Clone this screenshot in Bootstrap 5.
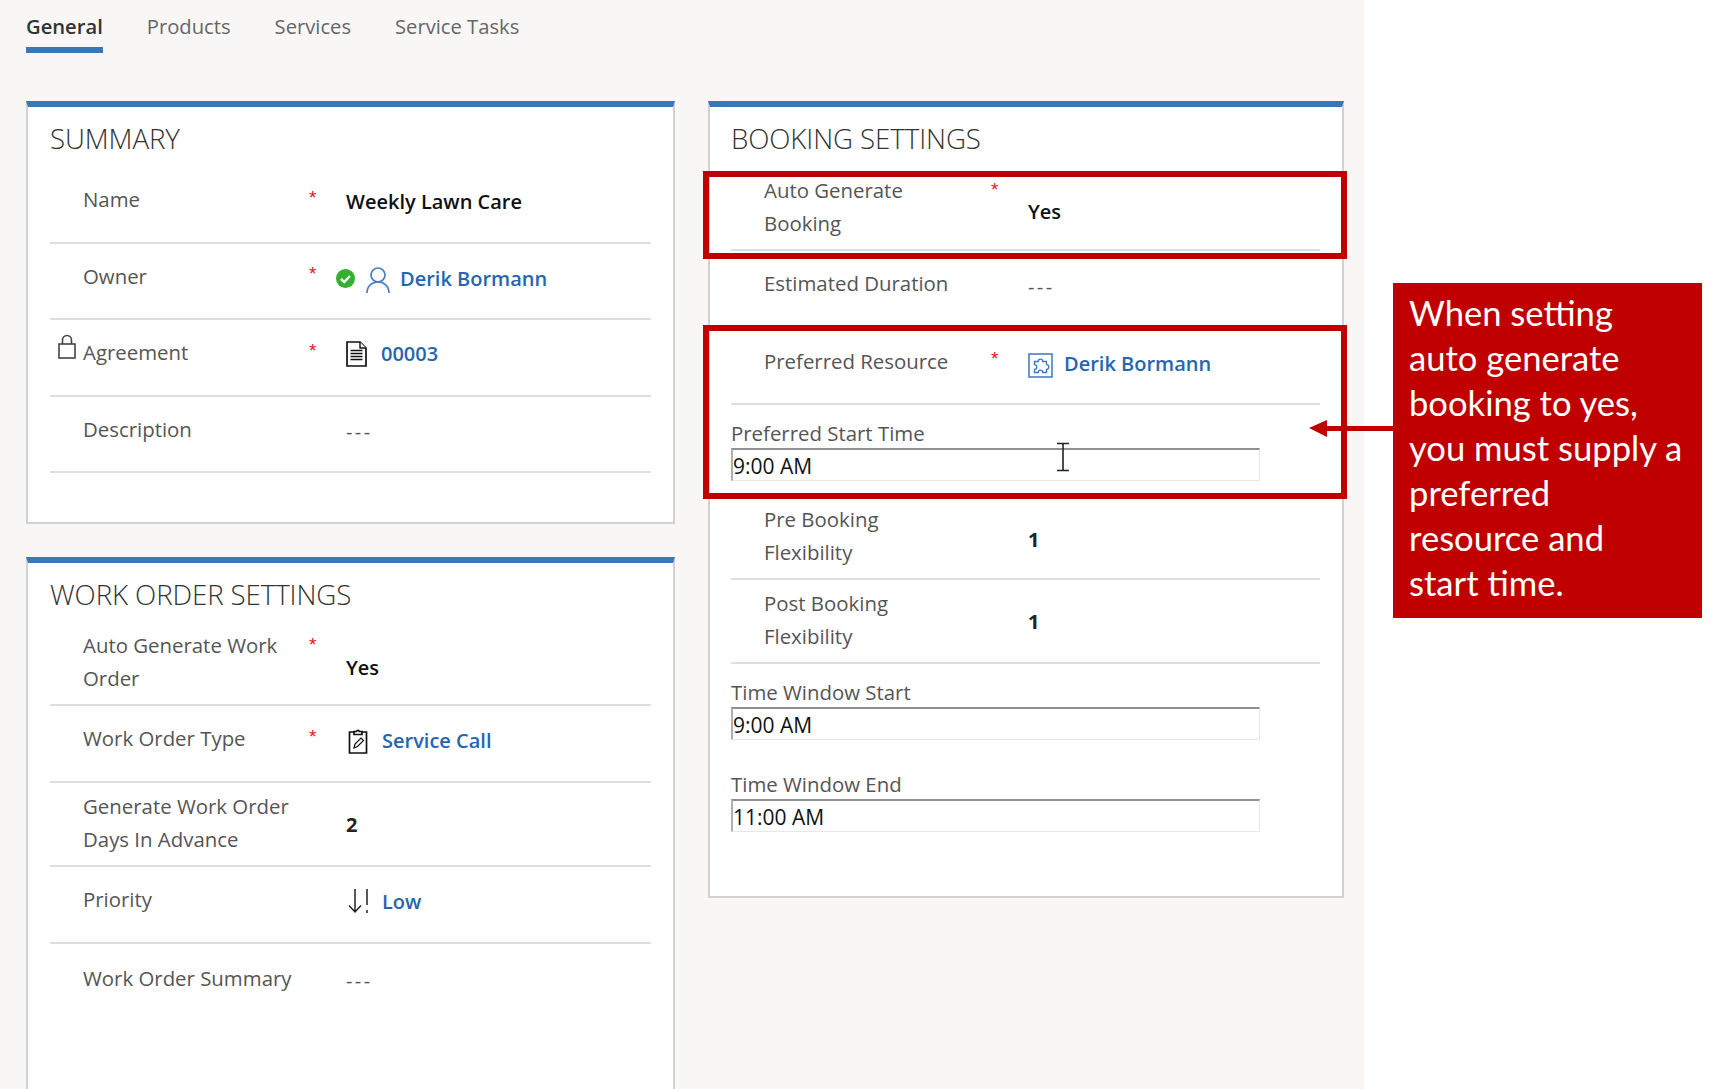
<!DOCTYPE html>
<html lang="en"><head><meta charset="utf-8"><title>Agreement booking setup</title>
<link rel="stylesheet" href="https://cdn.jsdelivr.net/npm/bootstrap@5.3.0/dist/css/bootstrap.min.css">
<style>
html,body{margin:0;background:#fff;overflow:hidden}
body{font-family:"Open Sans","Noto Sans",sans-serif}
.stage{width:1716px;height:1089px;overflow:hidden}
.sheet{width:1364px;height:1089px;background:#f8f7f6;padding-left:26px;overflow:hidden;flex:none}
.tabbar{height:101px;gap:44px;align-items:flex-start}
.tabitem{display:block;height:53px;padding:11px 0 0;font-size:20.2px;line-height:30px;color:#666;text-decoration:none}
.tabitem.on{color:#333;font-weight:600;border-bottom:6px solid #3a76b8}
.leftcol{width:649px;gap:33px}
.rightcol{width:636px;margin-left:33px}
.sect{border:2px solid #d2d2d2;border-top:6px solid #3a76b8;border-radius:0;background:#fff;padding:0 22px}
.sect.s1{height:423px}.sect.s2{height:620px}.sect.s3{height:797px;padding-left:21px}
.sect-title{font-size:27.7px;font-weight:300;color:#333;height:60px;line-height:34px;padding-top:14px;margin:0;letter-spacing:-.1px}
.fld{height:76.5px;border-bottom:2px solid #dedede;padding:16px 0 0 33px;display:flex;align-items:flex-start;position:relative}
.fld.two{padding-top:7px;height:83px}
.fld.two.first{padding-top:6px}
.fld.gen{height:84px}
.fld.tall{height:77.5px}
.fld.bare{border-bottom:0}
.fld.pad-wo{padding-top:18px}
.flab{width:215px;margin-right:11px;font-size:20.4px;line-height:33px;color:#555;flex:none}
.s3 .flab{margin-right:12px}
.star{width:37px;flex:none;color:#e8141c;font-size:19px;line-height:19px;margin-top:4.5px;font-family:"Liberation Sans",sans-serif}
.two .star{margin-top:6px}
.fval{font-size:20px;line-height:33px;margin-top:2px;color:#111;display:flex;align-items:center;font-weight:600}
.fld.two .fval{margin-top:22px}
.fld.two .fval.vgen{margin-top:18px}
.fld.two .fval.vbook{margin-top:20.500px}
.fld.two .fval.flexa{margin-top:19.6px}
.fld.two .fval.flexb{margin-top:18.4px}
.fval.vdoc{margin-top:1px}
.fval.ownerv{margin-left:-10px}
.fval.empty{color:#555;font-weight:400;letter-spacing:2.4px}
.fval a{color:#2566b0;text-decoration:none;letter-spacing:0}
.num{font-weight:700;color:#222}
.s3 .fld.bare{padding-top:16px}
.s3 .fld.bare .fval{margin-top:3px}
.ic-check{margin-right:10px}
.ic-person{margin-right:9px}
.ic-doc{margin-right:14px}
.ic-clip{margin:0 14px 0 2px}
.ic-prio{margin:0 12px 0 2px}
.ic-puzzle{margin-right:11px}
.lockic{position:absolute;left:7px;top:14px}
.tfld{font-size:20.4px;color:#555;line-height:30px}
.tinput.form-control{width:529px;height:33px;border-radius:0;border:1px solid #e8e8e8;border-top:2px solid #909090;border-left:2px solid #b0b0b0;padding:2px 0 0 0;font:21px "Open Sans",sans-serif;color:#111;box-shadow:none;background:#fff}
.redbox{position:absolute;border:6px solid #c00000;left:703px;width:644px}
.redbox.b1{top:171px;height:88px}
.redbox.b2{top:325px;height:174px}
.callout{position:absolute;left:1393px;top:283px;width:309px;height:335px;background:#c00000;color:#fff;font:34.6px/45px Lato,sans-serif;padding:7px 0 0 16px}
.arrowic{position:absolute;left:1309px;top:418px}
.caretic{position:absolute;left:1056px;top:442px}
.pad-a{padding-top:12.5px;height:91px}
.pad-b{padding-top:13px}
.pad-c{padding-top:29.4px}
</style></head><body>
<div class="stage position-relative d-flex">
<div class="sheet">
 <nav class="nav tabbar">
  <a class="tabitem on" href="#">General</a><a class="tabitem" href="#">Products</a><a class="tabitem" href="#">Services</a><a class="tabitem" href="#">Service Tasks</a>
 </nav>
 <div class="d-flex align-items-start">
  <div class="leftcol d-flex flex-column">
   <section class="card sect s1">
    <h2 class="sect-title">SUMMARY</h2>
    <div class="fld"><div class="flab">Name</div><div class="star">*</div><div class="fval">Weekly Lawn Care</div></div>
    <div class="fld"><div class="flab">Owner</div><div class="star">*</div><div class="fval ownerv">
      <svg class="ic-check" width="19" height="19" viewBox="0 0 19 19"><circle cx="9.5" cy="9.5" r="9.5" fill="#33b02f"/><path d="M5 9.8l3.2 3.2L14 7" fill="none" stroke="#fff" stroke-width="2.4"/></svg>
      <svg class="ic-person mt-1" width="26" height="28" viewBox="0 0 26 28" fill="none" stroke="#4a7fc0" stroke-width="1.7"><circle cx="13" cy="9" r="7"/><path d="M2 27c0-7 5-11 11-11s11 4 11 11"/></svg>
      <a href="#">Derik Bormann</a></div></div>
    <div class="fld"><svg class="lockic" width="20" height="26" viewBox="0 0 20 26" fill="none" stroke="#444" stroke-width="1.6"><rect x="2" y="10" width="16" height="14"/><path d="M5.5 10V6a4.5 4.5 0 0 1 9 0v4"/></svg>
      <div class="flab">Agreement</div><div class="star">*</div><div class="fval vdoc">
      <svg class="ic-doc" width="21" height="26" viewBox="0 0 21 26" fill="#fff" stroke="#111" stroke-width="1.7"><path d="M1 1h13l6 6v18H1z"/><path d="M14 1v6h6M4.500 9.500h12M4.500 12.500h12M4.500 15.500h12M4.500 18.500h12" stroke-width="1.4"/></svg>
      <a href="#">00003</a></div></div>
    <div class="fld"><div class="flab">Description</div><div class="star"></div><div class="fval empty">---</div></div>
   </section>
   <section class="card sect s2">
    <h2 class="sect-title">WORK ORDER SETTINGS</h2>
    <div class="fld two first"><div class="flab">Auto Generate Work<br>Order</div><div class="star">*</div><div class="fval">Yes</div></div>
    <div class="fld"><div class="flab">Work Order Type</div><div class="star">*</div><div class="fval">
      <svg class="ic-clip" width="20" height="26" viewBox="0 0 20 26" fill="none" stroke="#111" stroke-width="1.7"><path d="M6 4H1.500v21h17V4H14"/><path d="M6 6.500V3.500h2.500a1.600 1.600 0 0 1 3 0H14v3z"/><path d="M6 20l1-4 6-6 2.500 2.500-6 6z" stroke-width="1.2"/></svg>
      <a href="#">Service Call</a></div></div>
    <div class="fld two gen"><div class="flab">Generate Work Order<br>Days In Advance</div><div class="star"></div><div class="fval num vgen">2</div></div>
    <div class="fld tall"><div class="flab">Priority</div><div class="star"></div><div class="fval">
      <svg class="ic-prio" width="22" height="26" viewBox="0 0 22 26" fill="none" stroke="#222" stroke-width="1.5"><path d="M7 1v23M1 17.500l6 6.500 6-6.500"/><path d="M19 1v16M19 22v3"/></svg>
      <a href="#">Low</a></div></div>
    <div class="fld bare pad-wo"><div class="flab">Work Order Summary</div><div class="star"></div><div class="fval empty">---</div></div>
   </section>
  </div>
  <div class="rightcol">
   <section class="card sect s3">
    <h2 class="sect-title">BOOKING SETTINGS</h2>
    <div class="fld two gen"><div class="flab">Auto Generate<br>Booking</div><div class="star">*</div><div class="fval vbook">Yes</div></div>
    <div class="fld bare tall"><div class="flab">Estimated Duration</div><div class="star"></div><div class="fval empty">---</div></div>
    <div class="fld"><div class="flab">Preferred Resource</div><div class="star">*</div><div class="fval">
      <svg class="ic-puzzle mt-1" width="25" height="25" viewBox="0 0 25 25" fill="none" stroke="#3a78c4" stroke-width="1.5"><rect x="1" y="1" width="23" height="23"/><path d="M6.500 8.500h3.700a2.300 2.300 0 1 1 4.600 0h3.700v3.200a2.300 2.300 0 1 1 0 4.600v3.200h-3.700a2.300 2.300 0 1 0-4.600 0H6.500v-3.200a2.300 2.300 0 1 0 0-4.600z" stroke-width="1.3"/></svg>
      <a href="#">Derik Bormann</a></div></div>
    <div class="pad-a"><div class="tfld">Preferred Start Time</div><input class="form-control tinput" readonly value="9:00 AM"></div>
    <div class="fld two gen"><div class="flab">Pre Booking<br>Flexibility</div><div class="star"></div><div class="fval num flexa">1</div></div>
    <div class="fld two gen"><div class="flab">Post Booking<br>Flexibility</div><div class="star"></div><div class="fval num flexb">1</div></div>
    <div class="pad-b"><div class="tfld">Time Window Start</div><input class="form-control tinput" readonly value="9:00 AM"></div>
    <div class="pad-c"><div class="tfld">Time Window End</div><input class="form-control tinput" readonly value="11:00 AM"></div>
   </section>
  </div>
 </div>
</div>
<div class="redbox b1"></div>
<div class="redbox b2"></div>
<svg class="arrowic" width="84" height="20" viewBox="0 0 84 20"><path d="M0 10L18 2v6h66v5H18v6z" fill="#c00000"/></svg>
<svg class="caretic" width="14" height="30" viewBox="0 0 14 30" fill="none" stroke="#222" stroke-width="1.6"><path d="M1 1.500h12M1 28.500h12M7 1.500v27"/></svg>
<div class="callout">When setting<br>auto generate<br>booking to yes,<br>you must supply a<br>preferred<br>resource and<br>start time.</div>
</div>
</body></html>
